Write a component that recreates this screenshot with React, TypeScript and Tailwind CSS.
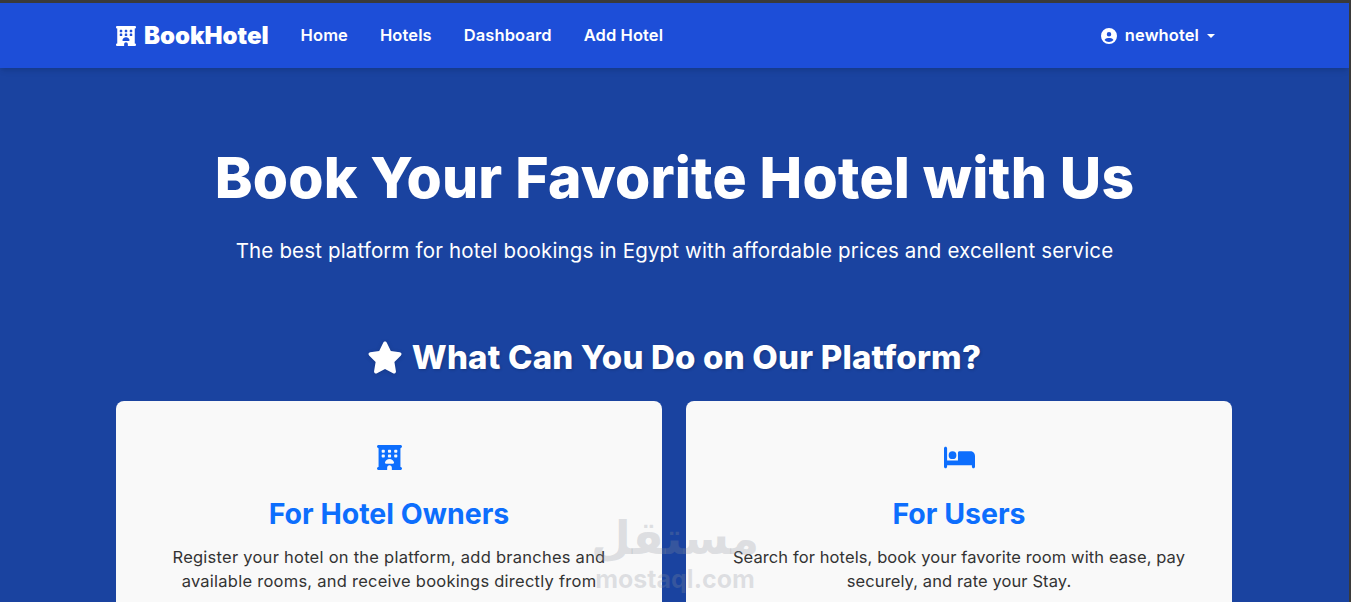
import React from 'react';
import { FaBed, FaCircleUser, FaHotel, FaStar } from 'react-icons/fa6';

const navLinks = ['Home', 'Hotels', 'Dashboard', 'Add Hotel'];

const App: React.FC = () => {
  return (
    <div className="relative h-[602px] w-full overflow-hidden bg-[#3a3a3a] pr-[2px] pt-[3px] font-['Inter','Liberation_Sans',sans-serif]">
      <div className="h-full overflow-hidden bg-[#1a43a0]">
        {/* Navbar */}
        <nav className="h-[65px] bg-[#1d4ed8] shadow-md">
          <div className="ml-[116px] flex h-full w-[1099px] items-center">
            <a className="flex items-center gap-[8px] text-[24px] font-black text-white">
              <FaHotel className="h-[20px] w-[20px]" />
              BookHotel
            </a>
            <ul className="ml-[32px] flex items-center gap-[32px] text-[16.5px] font-semibold tracking-[0.1px] text-white">
              {navLinks.map((link) => (
                <li key={link}>{link}</li>
              ))}
            </ul>
            <div className="ml-auto flex items-center text-[16.5px] font-semibold tracking-[0.1px] text-white">
              <FaCircleUser className="mr-[8px] h-[16px] w-[16px]" />
              newhotel
              <span className="ml-[8px] border-x-[4px] border-t-[4px] border-x-transparent border-t-white" />
            </div>
          </div>
        </nav>

        {/* Hero */}
        <header className="pt-[74px] text-center text-white">
          <h1 className="text-[57px] font-extrabold leading-[72px] tracking-[0.2px]">
            Book Your Favorite Hotel with Us
          </h1>
          <p className="mt-[22px] text-[20.5px] leading-[30px] tracking-[0.15px]">
            The best platform for hotel bookings in Egypt with affordable prices and excellent service
          </p>
        </header>

        {/* Features */}
        <section className="ml-[116px] mt-[69px] w-[1116px]">
          <h2 className="flex items-center justify-center gap-[9px] text-[33px] font-extrabold leading-[44px] tracking-[0.2px] text-white [text-shadow:1px_1px_3px_rgba(0,0,0,0.2)]">
            <FaStar className="h-[35px] w-[36px] drop-shadow-sm" />
            What Can You Do on Our Platform?
          </h2>
          <div className="mt-[22px] grid grid-cols-2 gap-[24px]">
            <div className="h-[300px] rounded-lg bg-[#f9f9f9] px-[52px] pt-[44px] text-center">
              <FaHotel className="mx-auto h-[25px] w-[25px] text-[#0d6efd]" />
              <h3 className="mt-[23px] text-[28.5px] font-bold leading-[42px] text-[#0d6efd]">For Hotel Owners</h3>
              <p className="mt-[10px] text-[16.5px] leading-[24px] tracking-[0.25px] text-[#333333]">
                Register your hotel on the platform, add branches and available rooms, and receive bookings directly from users.
              </p>
            </div>
            <div className="h-[300px] rounded-lg bg-[#f9f9f9] px-[40px] pt-[44px] text-center">
              <FaBed className="mx-auto h-[25px] w-[31px] text-[#0d6efd]" />
              <h3 className="mt-[23px] text-[28.5px] font-bold leading-[42px] text-[#0d6efd]">For Users</h3>
              <p className="mt-[10px] text-[16.5px] leading-[24px] tracking-[0.1px] text-[#333333]">
                Search for hotels, book your favorite room with ease, pay securely, and rate your Stay.
              </p>
            </div>
          </div>
        </section>
      </div>

      {/* Watermark */}
      <div className="pointer-events-none absolute left-[595px] top-[508px] flex w-[160px] flex-col items-center text-[#8a8f99]/25">
        <span className="font-['DejaVu_Sans',sans-serif] text-[46px] font-bold leading-[60px]">مستقل</span>
        <span className="mt-[-1px] text-[25px] font-bold leading-[24px]">mostaql.com</span>
      </div>
    </div>
  );
};

export default App;
